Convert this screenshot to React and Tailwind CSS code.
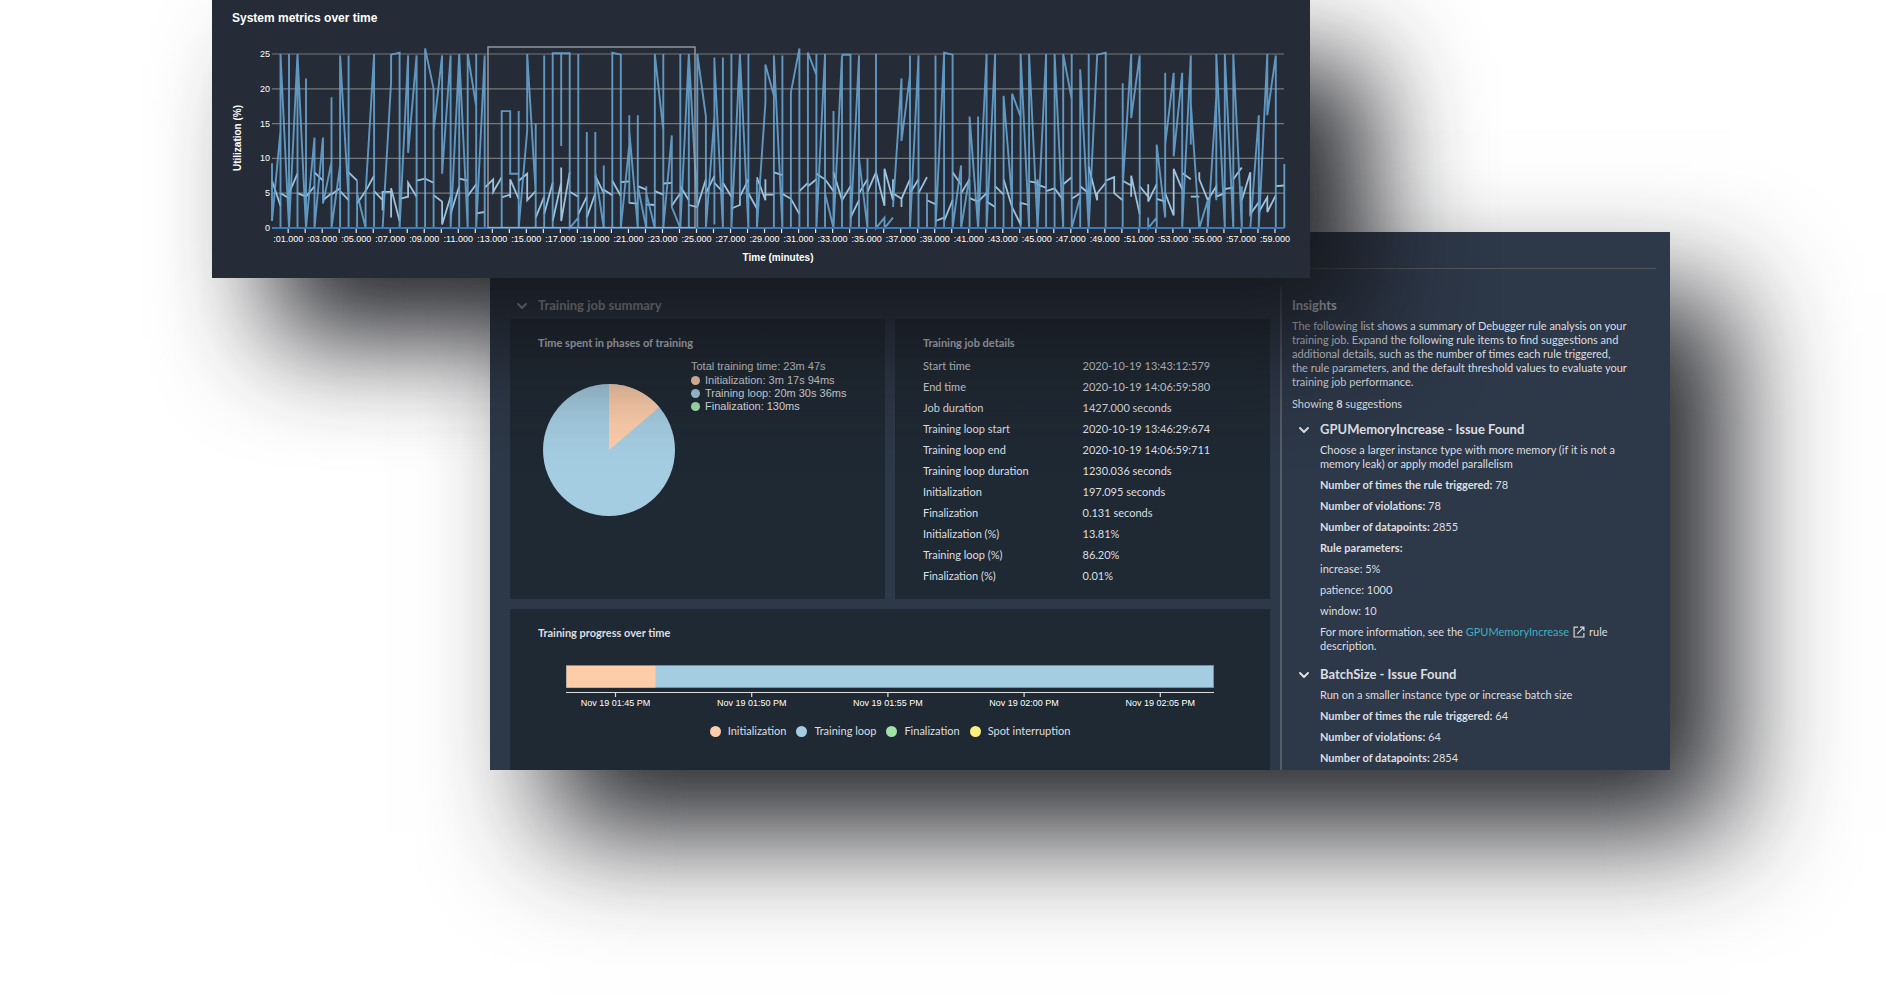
import React, { useState } from 'react'
import { ChevronDown } from 'lucide-react'

// Polylines are separated by ";", points are "half-second,percent"
const BUSY = `
0,9.3 0,1 1,14 1,25 1,0; 1,25 2,0 2,25; 2,0 3,25 3,0; 3,25 4,0 4,21.5; 4,0 5,13 5,0 6,13 6,3.5 7,9.5; 7,18.8 7,0 8,9;
8,0 8,24.8 9,4; 9,24.8 9,0; 10,6.8 10,0; 10,5 11,0 11,5 12,25 12,0; 13,0 14,21 14,24.9 15,25.2 15,0 16,24.8 16,10.8 17,24.8 17,0;
18,0 18,25.8 19,20 19,0; 19,14 20,24.8 20,7.8 21,24.8 21,0 22,25 22,0; 22,25 23,0 23,25 24,17.5; 24,25 24,0 25,24.8 25,0;
27,0 27,16.8 28,16.8 28,7.8 29,7.8; 29,16.8 29,0 30,14 30,25 31,5 31,0; 31,15 31,5; 32,24.8 32,0; 33,0 33,25.1 35,25.1 35,0 36,1.5; 34,25 34,11.8;
36,25 36,0; 37,13.8 37,0; 38,13.8 38,0; 38,8 39,0 39,9; 40,0 40,25.2 41,24.9 41,0 42,12 42,16.2 42,3.5; 42,14 43,0 43,16.2;
43,6 44,0 44,6; 44,5 45,0 45,25 46,14; 46,25 46,0 47,13.3 47,3 48,0 48,25; 48,0 49,25 49,0; 49,25 50,3; 50,0 50,25 51,16 51,0 52,16 52,24.5;
52,.5 52,24 53,0 53,24.5; 54,25 54,0 55,25 55,4; 55,25 56,0 56,25; 57,7 57,0 58,18 58,23.5 59,19; 59,0 59,24.8 60,0 60,24.8;
61,0 61,19.5 62,25.8 62,0; 63,0 63,25.2 64,22; 64,25 64,0 65,25 65,0; 65,5 66,0 66,16.8; 66,0 67,24.8 67,0; 67,24.9 68,24.9 68,0 69,24.8 69,0;
69,10 70,0 70,10; 71,25 71,0 72,1.5 72,0 73,1.5; 73,3 74,21.5 74,12.5 75,22 75,24.8; 75,0 75,22; 75,0 76,24.8 76,0; 77,5 77,0; 78,24.8 78,0 79,25.2 80,24.9 80,0;
79,25 79,0; 80,0 81,9 81,0 82,7.5 82,16; 82,7 82,0; 82,16 83,0 83,16; 83,0 84,25 84,0; 84,0 85,25 85,0; 86,0 86,19 87,4; 87,0 87,19.3 88,16; 88,0 88,25 89,0 89,25;
89,25 90,0 90,7; 90,0 91,25 91,0; 92,0 92,25 93,0 93,25 94,18.5; 94,25 94,0 95,4.5; 95,0 95,22.8 96,0 96,25; 96,0 97,24.9 98,25.2 98,0;
100,20.8 100,0; 100,6 101,25 101,15.8 102,24.8 102,0; 103,1.5 103,0 104,1.5; 104,0 104,12 105,1.5 105,22.3; 105,12 106,22.3 106,10.3 107,22.3 107,0;
107,0 108,24.8 108,12; 108,24 108,18 109,0 110,4 110,0 111,19 111,25; 111,4 111,25 112,0 112,25; 112,25 113,0 113,25; 113,25 114,0 114,6; 115,0 116,16.2 116,0;
116,0 117,25 117,16.2 118,24.8 118,0; 119,9.2 119,0`

const IDLE = `
0,6.8 1,3.2; 1,5 2,4.3; 2,5 3,7.8; 3,5 4,4.5 5,6; 5,8 6,6.8; 6,4 7,5; 7,4.8 8,5.7; 8,5.3 9,4; 9,8 10,6.8; 10,3.5 11,5.3 12,7.5; 12,5.3 13,4; 13,2.5 13,5.2 14,5.2;
14,1.5 14,5.7 15,1; 15,4.2 16,4.5 16,6.5 17,4.5; 17,6.8 18,7.1 19,6.5; 19,4.7 20,3.8 20,.5 21,4.5; 21,2 22,6; 22,7.1 23,6.8; 23,4.6 24,6.3; 24,2.1 25,2.3;
25,5.8 26,7 26,5.2 27,7.3; 27,4.4 28,4.8; 28,4.3 28,7 29,4.2; 29,6.8 30,7.8 30,4 31,5.3; 31,1.5 32,4.5; 32,2 33,6.5; 33,1 34,6.5; 34,8.7 34,1 35,8; 35,5.2 36,4.5;
36,2 37,4.5; 37,1.5 38,5; 38,7.5 39,5; 39,5.5 40,4.7; 40,6.8 41,4.6; 41,6.6 42,6.7; 42,3.6 43,3.5; 43,6 44,5.5; 44,3.4 45,3.3; 45,5.3 46,4.8; 46,6.4 47,6.5;
47,3.2 48,5; 48,6 49,4; 49,3.3 50,3; 50,3 51,7; 51,5 52,7.5; 52,6.5 53,5.2; 53,6.5 54,4.5; 54,2.8 55,3.3 55,5; 55,4.5 56,7; 56,5 57,2.8; 57,7.3 58,4 58,7;
58,4.8 59,4.8; 59,8 60,7.6; 60,4.9 61,4.2 62,2; 62,5.3 63,6.5; 63,6 64,7; 64,7.8 65,7 66,5.3; 66,8 67,4 68,6; 68,1.5 69,4; 69,5 70,7; 70,5.2 71,8 72,3.2 72,8.5 73,4 73,7;
73,5 74,4.2; 74,3 74,4.2 75,7; 75,5 76,7; 76,5 77,7.3; 77,4 78,3.4; 78,1 79,1.5; 79,1 80,4; 80,8 81,6.2; 81,5 82,7; 82,4.3 83,3.8 84,5; 84,3.8 85,3; 85,6 86,4.8;
86,7 87,3 88,.5 88,3.6 89,3.3; 89,6.7 90,6.5; 90,6.8 90,6.2 91,5.8; 91,5.3 92,5.7 93,4; 93,6.3 94,7.3; 94,4.2 95,5; 95,6 96,5; 96,8.8 97,4 97,5 98,6.5; 98,6.8 99,7.3 99,5 100,4;
100,6.8 101,6.1; 101,4.5 101,7.5 102,2; 102,6 103,4.5; 103,6.3 103,3.8 104,6.3; 104,4.2 105,3.8; 105,5 106,1.8 106,8.5 107,5.5; 107,7.9 108,7; 108,4.5 109,4.5; 109,8 109,7 110,4;
110,4 111,6 111,4.5 112,5; 112,5.6 113,5.8; 113,7 114,8.7; 114,4 115,8 115,2 116,3.7; 116,2.3 117,4.4 117,2.3 118,4.7; 118,6 119,6.1`

const px = k => 60 + k * 8.507
const py = v => 189 - v * 6.96

const toPath = series =>
  series
    .split(';')
    .map(line =>
      line.trim().split(/\s+/).map((point, i) => {
        const [k, v] = point.split(',').map(Number)
        return `${i ? 'L' : 'M'}${px(k).toFixed(1)} ${py(v).toFixed(1)}`
      }).join('')
    )
    .join('')

const SECONDS = Array.from({ length: 59 }, (_, i) => i + 1)

const JOB_DETAILS = [
  ['Start time', '2020-10-19 13:43:12:579'],
  ['End time', '2020-10-19 14:06:59:580'],
  ['Job duration', '1427.000 seconds'],
  ['Training loop start', '2020-10-19 13:46:29:674'],
  ['Training loop end', '2020-10-19 14:06:59:711'],
  ['Training loop duration', '1230.036 seconds'],
  ['Initialization', '197.095 seconds'],
  ['Finalization', '0.131 seconds'],
  ['Initialization (%)', '13.81%'],
  ['Training loop (%)', '86.20%'],
  ['Finalization (%)', '0.01%'],
]

const PHASE_TIMES = [
  ['bg-[#fdcdaa]', 'Initialization: 3m 17s 94ms'],
  ['bg-[#a5cde1]', 'Training loop: 20m 30s 36ms'],
  ['bg-[#a1e2a9]', 'Finalization: 130ms'],
]

const PROGRESS_LEGEND = [
  ['bg-[#fdcdaa]', 'Initialization'],
  ['bg-[#a5cde1]', 'Training loop'],
  ['bg-[#a1e2a9]', 'Finalization'],
  ['bg-[#fff07c]', 'Spot interruption'],
]

const PROGRESS_TICKS = ['01:45', '01:50', '01:55', '02:00', '02:05']

function MetricsChart() {
  return (
    <svg
      viewBox="0 0 1098 239"
      className="block w-full font-['Liberation_Sans',sans-serif]"
      role="img"
      aria-label="System metrics over time"
    >
      {[0, 5, 10, 15, 20, 25].map(v => (
        <g key={v}>
          <path d={`M60 ${py(v)}H1072`} stroke="#75787a" strokeWidth="1.2" />
          <text x="58" y={py(v) + 3} textAnchor="end" fontSize="9" fill="#fff">{v}</text>
        </g>
      ))}
      {SECONDS.map(s => (
        <path key={s} d={`M${px(s * 2 - 0.1)} 190V194`} stroke="#e8e8e8" strokeWidth="1.2" />
      ))}
      {SECONDS.filter(s => s % 2).map(s => (
        <text key={s} x={px(s * 2 - 0.1)} y="203" textAnchor="middle" fontSize="9" fill="#fff">
          :{String(s).padStart(2, '0')}.000
        </text>
      ))}
      <path d={toPath(IDLE)} fill="none" stroke="#9cc3dd" strokeWidth="1.8" />
      <path d={toPath(BUSY)} fill="none" stroke="#67a3cf" strokeWidth="1.9" opacity="0.9" />
      <path d="M60 189H1072" stroke="#3b78b8" strokeWidth="2" />
      <rect x="276" y="8" width="207" height="180.5" fill="none" stroke="#a3a8ae" strokeWidth="1.3" />
      <text x="566" y="222" textAnchor="middle" fontSize="10" fontWeight="700" fill="#fff">Time (minutes)</text>
      <text x="29" y="99" transform="rotate(-90 29 99)" textAnchor="middle" fontSize="10" fontWeight="700" fill="#fff">
        Utilization (%)
      </text>
    </svg>
  )
}

function PhasesPie() {
  return (
    <svg viewBox="0 0 132 132" className="mt-[26px] size-[132px] shrink-0" role="img" aria-label="Phases of training">
      <circle cx="66" cy="66" r="66" fill="#a5cde1" />
      <path d="M66 66V0A66 66 0 0 1 116.3 23.3Z" fill="#fdcdaa" />
    </svg>
  )
}

function ProgressChart() {
  return (
    <svg
      viewBox="0 0 648 46"
      className="mt-6 block w-full font-['Liberation_Sans',sans-serif]"
      role="img"
      aria-label="Training progress"
    >
      <rect x="0.5" y="0.5" width="647" height="22" fill="#a5cde1" stroke="#76909f" />
      <rect x="0.5" y="1" width="89" height="21.5" fill="#fdcdaa" />
      <path d="M0 27.5H648" stroke="#d9dbdd" strokeWidth="1.2" />
      {PROGRESS_TICKS.map((tick, i) => (
        <g key={tick}>
          <path d={`M${49.5 + i * 136.2} 28V32`} stroke="#d9dbdd" strokeWidth="1.2" />
          <text x={49.5 + i * 136.2} y="41" textAnchor="middle" fontSize="9" fill="#fff">
            Nov 19 {tick} PM
          </text>
        </g>
      ))}
    </svg>
  )
}

function ExternalIcon() {
  return (
    <svg viewBox="0 0 12 12" className="mx-1 inline size-3 align-[-2px]" fill="none" stroke="#d8dadd" strokeWidth="1.2">
      <path d="M5 1.1H1.1V11H10.9V7M7 1.1H10.9V5M10.6 1.4L4.2 7.8" />
    </svg>
  )
}

function Stat({ label, value }) {
  return <p><b className="font-bold">{label}:</b> {value}</p>
}

function Disclosure({ title, children }) {
  const [open, setOpen] = useState(true)
  return (
    <section>
      <button
        onClick={() => setOpen(!open)}
        aria-expanded={open}
        className="flex h-5 items-center gap-2 pl-px text-[13px] font-bold"
      >
        <ChevronDown size={16} strokeWidth={3} className="mt-[2px]" />
        {title}
      </button>
      {open && <div className="mt-1 flex flex-col gap-[7px] pl-[25px]">{children}</div>}
    </section>
  )
}

function MetricsPanel() {
  return (
    <section className="relative z-10 ml-[212px] mr-[576px] bg-[#252c37] shadow-[60px_62px_110px_rgba(20,22,27,0.93)]">
      <h2 className="px-5 pb-[13px] pt-[10px] font-['Liberation_Sans',sans-serif] text-[12px] font-bold leading-4 text-white">
        System metrics over time
      </h2>
      <MetricsChart />
    </section>
  )
}

function JobSummary() {
  return (
    <div className="flex min-w-0 flex-1 flex-col">
      <button className="flex h-[50px] items-center gap-2 pl-1 pt-[22px] text-[13px] font-bold text-[#d5d7da]">
        <ChevronDown size={16} strokeWidth={3} className="mt-[2px]" />
        Training job summary
      </button>
      <div className="flex gap-[10px]">
        <section className="flex-1 bg-[#1f2933] px-7 pb-[13px] pt-4">
          <h3 className="font-bold leading-4">Time spent in phases of training</h3>
          <div className="mt-[7px] flex gap-4 pl-[5px] font-['Liberation_Sans',sans-serif]">
            <PhasesPie />
            <div>
              <p className="leading-4">Total training time: 23m 47s</p>
              <ul className="leading-[13px]">
                {PHASE_TIMES.map(([dot, label]) => (
                  <li key={label} className="flex items-center gap-[5px]">
                    <span className={`size-[9px] rounded-full ${dot}`} />
                    {label}
                  </li>
                ))}
              </ul>
            </div>
          </div>
        </section>
        <section className="flex-1 bg-[#1f2933] px-7 pb-[13px] pt-4">
          <h3 className="mb-1 font-bold leading-4">Training job details</h3>
          <table className="w-full table-fixed text-left leading-[21px]">
            <tbody>
              {JOB_DETAILS.map(([label, value]) => (
                <tr key={label}>
                  <th className="font-normal">{label}</th>
                  <td>{value}</td>
                </tr>
              ))}
            </tbody>
          </table>
        </section>
      </div>
      <section className="mt-[10px] flex-1 bg-[#1f2933] px-14 pt-4">
        <h3 className="-ml-7 font-bold leading-4">Training progress over time</h3>
        <ProgressChart />
        <ul className="mt-[11px] flex justify-center gap-[10px] leading-[18px]">
          {PROGRESS_LEGEND.map(([dot, label]) => (
            <li key={label} className="flex items-center gap-[7px]">
              <span className={`size-[11px] rounded-full ${dot}`} />
              {label}
            </li>
          ))}
        </ul>
      </section>
    </div>
  )
}

function Insights() {
  return (
    <aside className="mt-[18px] w-[376px] shrink-0 border-l-2 border-[#565d66] pb-[5px] pl-[10px]">
      <h2 className="mb-[5px] mt-[9px] text-[13px] font-bold leading-[18px]">Insights</h2>
      <p>
        The following list shows a summary of Debugger rule analysis on your<br />
        training job. Expand the following rule items to find suggestions and<br />
        additional details, such as the number of times each rule triggered,<br />
        the rule parameters, and the default threshold values to evaluate your<br />
        training job performance.
      </p>
      <p className="mb-2 mt-2">Showing <b className="font-bold">8</b> suggestions</p>
      <div className="flex flex-col gap-[11px] pl-[3px]">
        <Disclosure title="GPUMemoryIncrease - Issue Found">
          <p>
            Choose a larger instance type with more memory (if it is not a<br />
            memory leak) or apply model parallelism
          </p>
          <Stat label="Number of times the rule triggered" value="78" />
          <Stat label="Number of violations" value="78" />
          <Stat label="Number of datapoints" value="2855" />
          <p className="font-bold">Rule parameters:</p>
          <p>increase: 5%</p>
          <p>patience: 1000</p>
          <p>window: 10</p>
          <p>
            For more information, see the <a href="#gpu-memory-increase" className="text-[#3fb0c0]">GPUMemoryIncrease</a>
            <ExternalIcon />rule<br />
            description.
          </p>
        </Disclosure>
        <Disclosure title="BatchSize - Issue Found">
          <p>Run on a smaller instance type or increase batch size</p>
          <Stat label="Number of times the rule triggered" value="64" />
          <Stat label="Number of violations" value="64" />
          <Stat label="Number of datapoints" value="2854" />
        </Disclosure>
      </div>
    </aside>
  )
}

export default function App() {
  return (
    <main className="min-h-screen overflow-hidden bg-white font-[Lato,sans-serif] text-[11px] leading-[14px] text-[#dddfe1]">
      <MetricsPanel />
      <div className="-mt-[46px] ml-[490px] mr-[216px] bg-[#2d3848] shadow-[60px_62px_110px_rgba(20,22,27,0.93)]">
        <div className="ml-5 mr-[14px] h-[37px] border-b border-[#54585d]" />
        <div className="flex gap-[10px] pl-5 pr-[14px]">
          <JobSummary />
          <Insights />
        </div>
      </div>
    </main>
  )
}
